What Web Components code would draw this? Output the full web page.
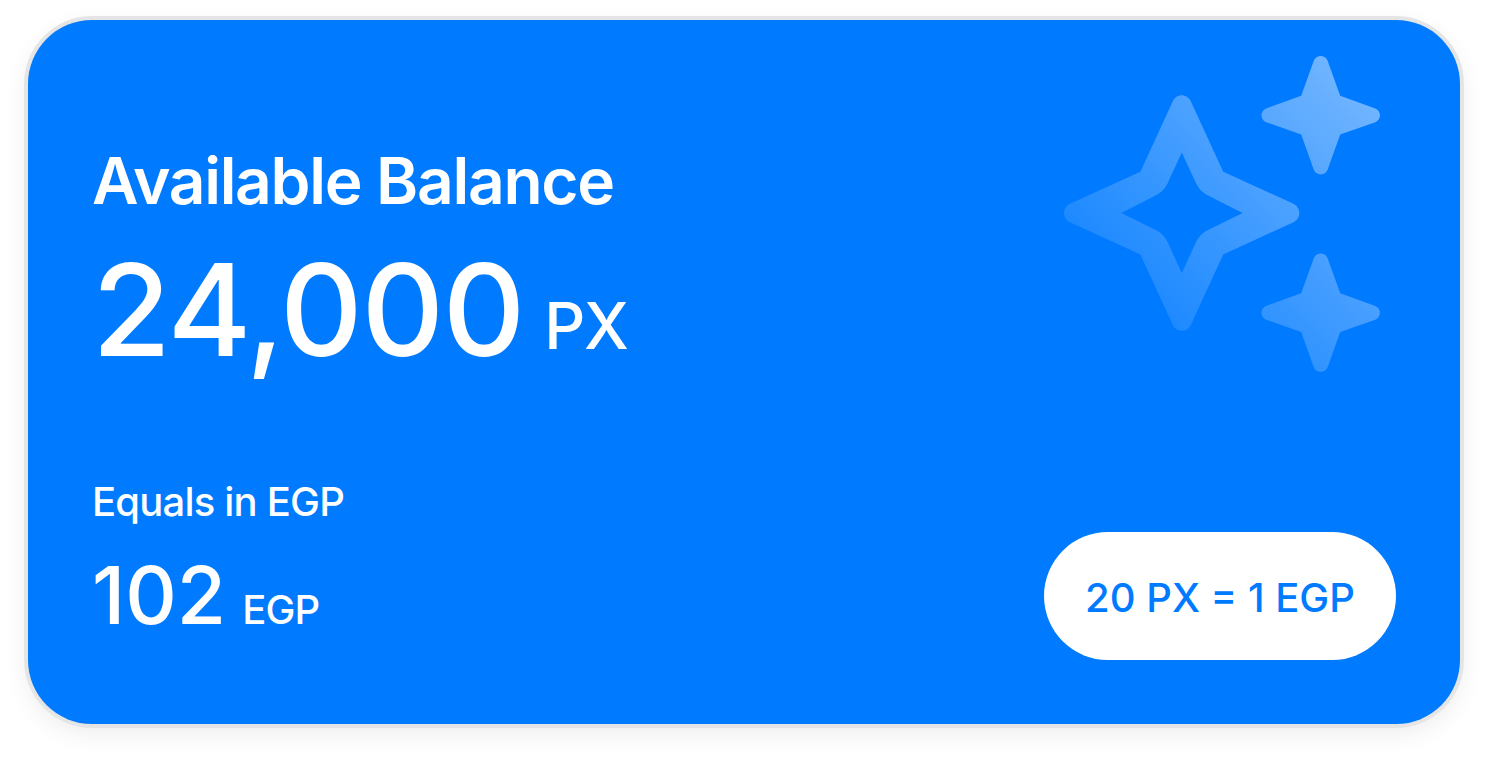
<!DOCTYPE html>
<html lang="en">
<head>
<meta charset="utf-8">
<meta name="viewport" content="width=device-width, initial-scale=1">
<title>Available Balance</title>
<style>
  body { margin: 0; background: #fff; font-family: Inter, "Liberation Sans", sans-serif; }
</style>
</head>
<body>
<balance-card>
  <money-amount size="large" label="Available Balance" value="24,000" unit="PX"></money-amount>
  <money-amount size="small" label="Equals in EGP" value="102" unit="EGP"></money-amount>
  <sparkle-art slot="art"></sparkle-art>
  <rate-pill slot="rate">20 PX = 1 EGP</rate-pill>
</balance-card>

<script>
class BalanceCard extends HTMLElement {
  constructor() {
    super();
    this.attachShadow({ mode: "open" }).innerHTML = `
      <style>
        :host { display: block; padding: 20px 28px 36px; }
        section {
          display: flex; justify-content: space-between;
          box-sizing: border-box; min-height: 704px; padding: 36px 64px 64px;
          border-radius: 64px; background: #007aff; color: #fff;
          box-shadow: 0 0 0 4px #e5e5e5, 0 8px 24px 2px rgba(0, 0, 0, .07);
        }
        .amounts { display: flex; flex-direction: column; justify-content: space-between; padding: 84px 0 17px; }
        .side { display: flex; flex-direction: column; justify-content: space-between; align-items: flex-end; }
      </style>
      <section>
        <div class="amounts"><slot></slot></div>
        <div class="side"><slot name="art"></slot><slot name="rate"></slot></div>
      </section>`;
  }
}

class MoneyAmount extends HTMLElement {
  constructor() {
    super();
    this.attachShadow({ mode: "open" }).innerHTML = `
      <style>
        :host { display: flex; flex-direction: column; font-weight: 500; white-space: nowrap; }
        h2, p { margin: 0; }
        h2 { font-weight: inherit; }
        p { display: flex; }
        :host([size="large"]) { gap: 24px; }
        :host([size="large"]) h2 { font-size: 64px; line-height: 82px; font-weight: 600; letter-spacing: -0.02em; }
        :host([size="large"]) p { align-items: flex-end; gap: 20px; }
        :host([size="large"]) .value { font-size: 128px; line-height: 128px; letter-spacing: -0.01em; }
        :host([size="large"]) .unit { font-size: 64px; line-height: 80px; padding-bottom: 8px; letter-spacing: -0.02em; }
        :host([size="small"]) { gap: 21px; }
        :host([size="small"]) h2 { font-size: 40px; line-height: 48px; letter-spacing: -0.02em; }
        :host([size="small"]) p { align-items: baseline; gap: 16px; }
        :host([size="small"]) .value { font-size: 80px; line-height: 96px; }
        :host([size="small"]) .unit { font-size: 40px; line-height: 48px; letter-spacing: -0.02em; }
      </style>
      <h2></h2>
      <p><span class="value"></span><span class="unit"></span></p>`;
  }
  connectedCallback() {
    const root = this.shadowRoot;
    root.querySelector("h2").textContent = this.getAttribute("label");
    root.querySelector(".value").textContent = this.getAttribute("value");
    root.querySelector(".unit").textContent = this.getAttribute("unit");
  }
}

class SparkleArt extends HTMLElement {
  constructor() {
    super();
    this.attachShadow({ mode: "open" }).innerHTML = `
      <style>
        :host { display: block; padding-right: 16px; }
        svg { display: block; width: 316px; height: 317px; }
      </style>
      <svg viewBox="0 0 316 317" aria-hidden="true">
        <defs>
          <linearGradient id="fade" gradientUnits="userSpaceOnUse" x1="316" y1="0" x2="0" y2="316">
            <stop offset="0" stop-color="#fff" stop-opacity=".48"/>
            <stop offset="1" stop-color="#fff" stop-opacity="0"/>
          </linearGradient>
        </defs>
        <g fill="url(#fade)">
          <path fill-rule="evenodd" d="M108.700 45.500C112.300 37.200 123.300 37.200 126.900 45.500L159.200 115.800L229.500 147.800C237.300 151.400 237.300 162.600 229.500 166.200L159.200 198.500L126.900 268.800C123.300 276.800 112.300 276.800 108.700 268.800L76.400 198.500L6 166.200C-2 162.600-2 151.400 6 147.800L76.400 115.800Z
            M117.800 96.500L104.600 124.900C101.800 131.800 97.300 136.800 90.600 140L57.300 157L90.600 173.500C97.300 176.500 101.800 181.500 104.600 188.200L117.800 217.300L131 188.200C133.800 181.500 138.300 176.500 145 173.500L178.600 157L145 140C138.300 136.800 133.800 131.800 131 124.900Z"/>
          <path d="M249.800 4.700C252.200-1.500 261.200-1.500 263.600 4.700L276.200 39.700L311.300 52.400C317.500 54.800 317.500 63.800 311.300 66.200L276.200 78.500L263.600 113.800C261.200 120 252.200 120 249.800 113.800L237.200 78.500L202.100 66.200C195.900 63.800 195.900 54.800 202.100 52.400L237.200 39.700Z"/>
          <path d="M249.800 202.200C252.200 196 261.200 196 263.600 202.200L276.200 237.200L311.300 249.900C317.500 252.300 317.500 261.300 311.300 263.700L276.200 276L263.600 311.300C261.200 317.500 252.200 317.500 249.800 311.300L237.200 276L202.100 263.700C195.900 261.300 195.900 252.300 202.100 249.900L237.200 237.200Z"/>
        </g>
      </svg>`;
  }
}

class RatePill extends HTMLElement {
  constructor() {
    super();
    this.attachShadow({ mode: "open" }).innerHTML = `
      <style>
        :host {
          display: block; box-sizing: border-box; min-width: 352px; padding: 42px 40px 38px;
          border-radius: 64px; background: #fff; color: #007aff; text-align: center;
          font-size: 40px; line-height: 48px; font-weight: 500; white-space: nowrap;
        }
      </style>
      <slot></slot>`;
  }
}

customElements.define("balance-card", BalanceCard);
customElements.define("money-amount", MoneyAmount);
customElements.define("sparkle-art", SparkleArt);
customElements.define("rate-pill", RatePill);
</script>
</body>
</html>
